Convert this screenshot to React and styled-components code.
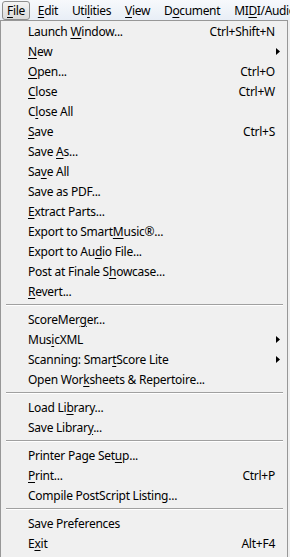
import React from "react"
import styled, { createGlobalStyle } from "styled-components"

const menuBar = [
  { label: "File", key: "F", active: true },
  { label: "Edit", key: "E" },
  { label: "Utilities", key: "l", at: 3 },
  { label: "View", key: "V" },
  { label: "Document", key: "o", at: 1 },
  { label: "MIDI/Audio", key: "D", at: 2 },
]

const groups = [
  [
    { label: "Launch Window...", at: 7, shortcut: "Ctrl+Shift+N" },
    { label: "New", at: 0, submenu: true },
    { label: "Open...", at: 0, shortcut: "Ctrl+O" },
    { label: "Close", at: 0, shortcut: "Ctrl+W" },
    { label: "Close All", at: 1 },
    { label: "Save", at: 0, shortcut: "Ctrl+S" },
    { label: "Save As...", at: 5 },
    { label: "Save All", at: 2 },
    { label: "Save as PDF..." },
    { label: "Extract Parts...", at: 0 },
    { label: "Export to SmartMusic®...", at: 15 },
    { label: "Export to Audio File...", at: 12 },
    { label: "Post at Finale Showcase...", at: 16 },
    { label: "Revert...", at: 0 },
  ],
  [
    { label: "ScoreMerger...", at: 8 },
    { label: "MusicXML", at: 3, submenu: true },
    { label: "Scanning: SmartScore Lite", at: 14, submenu: true },
    { label: "Open Worksheets & Repertoire...", at: 8 },
  ],
  [
    { label: "Load Library...", at: 7 },
    { label: "Save Library...", at: 11 },
  ],
  [
    { label: "Printer Page Setup...", at: 16 },
    { label: "Print...", at: 0, shortcut: "Ctrl+P" },
    { label: "Compile PostScript Listing..." },
  ],
  [
    { label: "Save Preferences" },
    { label: "Exit", at: 1, shortcut: "Alt+F4" },
  ],
]

// underline the access key letter at index `at`
const Mnemonic = ({ text, at }) => {
  if (at === undefined || at < 0) return text
  return (
    <>
      {text.slice(0, at)}
      <u>{text[at]}</u>
      {text.slice(at + 1)}
    </>
  )
}

const App = () => {
  return (
    <>
      <GlobalStyle />
      <Window>
        <MenuBar>
          {menuBar.map(item => (
            <BarItem key={item.label} $active={item.active}>
              <Mnemonic text={item.label} at={item.at ?? 0} />
            </BarItem>
          ))}
        </MenuBar>
        <Dropdown>
          {groups.map((group, i) => (
            <React.Fragment key={i}>
              {i > 0 && <Separator />}
              {group.map(item => (
                <Item key={item.label}>
                  <Label>
                    <Mnemonic text={item.label} at={item.at} />
                  </Label>
                  {item.shortcut && <span>{item.shortcut}</span>}
                  {item.submenu && (
                    <Arrow viewBox="0 0 4 7">
                      <path d="M0 0 L4 3.5 L0 7 Z" fill="#000" />
                    </Arrow>
                  )}
                </Item>
              ))}
            </React.Fragment>
          ))}
        </Dropdown>
      </Window>
    </>
  )
}

const GlobalStyle = createGlobalStyle`
  html, body {
    margin: 0;
    padding: 0;
    background: #f0f0f0;
    overflow: hidden;
  }
  body {
    font-family: "Noto Sans", "Open Sans", sans-serif;
    font-size: 12px;
    letter-spacing: -0.25px;
    color: #000;
  }
  u {
    text-decoration-thickness: 1px;
    text-underline-offset: 2px;
  }
`

const Window = styled.div`
  width: 290px;
  height: 557px;
  overflow: hidden;
  background: #f0f0f0;
`

const MenuBar = styled.div`
  display: flex;
  align-items: center;
  height: 20px;
  padding-left: 2px;
  background: linear-gradient(#f7f9fc, #e8eef6);
  white-space: nowrap;
  letter-spacing: -0.35px;
`

const BarItem = styled.div`
  height: 19px;
  line-height: 17px;
  padding: 0 ${p => (p.$active ? "4px" : "6px")};
  box-sizing: border-box;
  border: 1px solid ${p => (p.$active ? "#8e8f8f" : "transparent")};
  border-radius: 3px;
  background: ${p => (p.$active ? "linear-gradient(#f4f4f4, #dadada)" : "none")};
  margin-right: ${p => (p.$active ? "1px" : "0")};
`

const Dropdown = styled.div`
  width: 288px;
  height: 537px;
  box-sizing: border-box;
  border: 1px solid #979797;
  border-bottom: none;
  padding: 0 2px;
  background: #f0f0f0;
`

const Item = styled.div`
  display: flex;
  align-items: center;
  height: 20px;
  padding: 0 10px 0 25px;
  white-space: nowrap;
`

const Label = styled.span`
  flex: 1;
`

const Arrow = styled.svg`
  width: 4px;
  height: 7px;
  margin-right: -5px;
`

const Separator = styled.div`
  height: 1px;
  margin: 3px 2px 3px 3px;
  background: #a0a0a0;
  border-bottom: 1px solid #fff;
`

export default App
